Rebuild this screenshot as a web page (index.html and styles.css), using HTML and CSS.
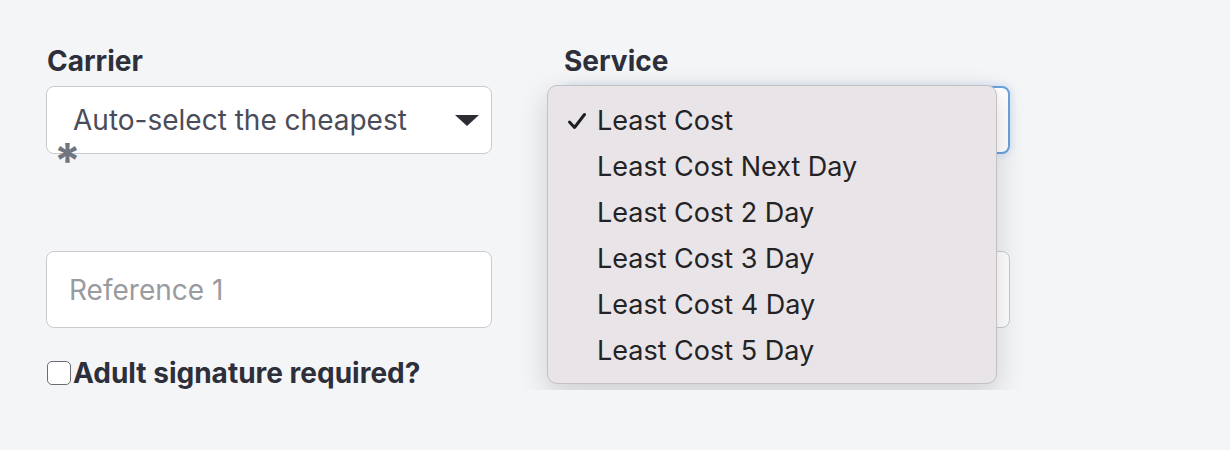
FILE: index.html
```html
<!DOCTYPE html>
<html lang="en">
<head>
  <meta charset="UTF-8" />
  <meta name="viewport" content="width=device-width, initial-scale=1.0">
  <title>Shipping options</title>
  <link rel="stylesheet" href="styles.css">
</head>
<body>
  <div class="shipping-form">
    <div class="field">
      <label class="field-label">Carrier</label>
      <div class="select-box">
        <span>Auto-select the cheapest</span>
        <svg class="caret" width="24" height="11" viewBox="0 0 24 11"><path d="M0 0 H24 L12 11 Z" fill="#2b2d33"/></svg>
      </div>
      <span class="required">*</span>
    </div>
    <div class="field">
      <label class="field-label">Service</label>
      <div class="select-box focused">
        <svg class="caret" width="24" height="11" viewBox="0 0 24 11"><path d="M0 0 H24 L12 11 Z" fill="#2b2d33"/></svg>
      </div>

      <!-- native select popup, open over the form -->
      <ul class="option-menu">
        <li class="selected">
          <svg class="check" width="20" height="18" viewBox="0 0 20 18"><path d="M2.5 10 L7.5 15.5 L17.5 2.5" fill="none" stroke="#1f1f22" stroke-width="3" stroke-linecap="round" stroke-linejoin="round"/></svg>
          Least Cost
        </li>
        <li>Least Cost Next Day</li>
        <li>Least Cost 2 Day</li>
        <li>Least Cost 3 Day</li>
        <li>Least Cost 4 Day</li>
        <li>Least Cost 5 Day</li>
      </ul>
    </div>

    <div class="field">
      <input type="text" class="text-input" placeholder="Reference 1">
    </div>
    <div class="field">
      <input type="text" class="text-input">
    </div>

    <label class="check-row">
      <input type="checkbox">
      <span>Adult signature required?</span>
    </label>
  </div>
</body>
</html>
```

FILE: styles.css
```css
body {
  margin: 0;
  background: #f4f5f7;
  font-family: Inter, "Noto Sans", sans-serif;
  color: #2f313a;
}
.shipping-form {
  display: grid;
  grid-template-columns: 446px 447px;
  column-gap: 71px;
  padding: 46px 0 0 46px;
}
.field {
  position: relative;
}
.field-label {
  display: block;
  font-size: 28px;
  font-weight: 700;
  line-height: 30px;
  margin: 0 0 10px 1px;
  color: #2d2f3a;
}
.select-box {
  box-sizing: border-box;
  height: 68px;
  background: white;
  border: 1px solid #c9cbd0;
  border-radius: 8px;
  display: flex;
  align-items: center;
  justify-content: space-between;
  padding: 0 12px 0 26px;
  font-size: 28px;
  color: #4a4d59;
}
.select-box.focused {
  justify-content: flex-end;
  border: 2px solid #6aa2e0;
  box-shadow: 0 0 8px rgba(106,162,224,0.35);
}
.required {
  display: block;
  height: 105px;
  margin: -8px 0 0 8px;
  font-size: 48px;
  line-height: 30px;
  font-weight: 700;
  color: #717580;
}
.text-input {
  box-sizing: border-box;
  width: 100%;
  height: 77px;
  background: white;
  border: 1px solid #c9cbd0;
  border-radius: 8px;
  padding: 0 22px;
  font-family: inherit;
  font-size: 28px;
  color: #2f313a;
}
.text-input::placeholder {
  color: #9a9b9f;
}
.check-row {
  grid-column: 1 / 3;
  display: flex;
  align-items: center;
  margin-top: 28px;
  font-size: 28px;
  line-height: 34px;
  font-weight: 700;
  color: #2d2f3a;
}
.check-row input {
  appearance: none;
  width: 24px;
  height: 24px;
  margin: 0 2px 0 1px;
  border: 1.5px solid #6b6d74;
  border-radius: 5px;
  background: white;
}
.option-menu {
  position: absolute;
  z-index: 10;
  left: -16px;
  top: 39px;
  width: 450px;
  box-sizing: border-box;
  margin: 0;
  padding: 12px 0 9px;
  list-style: none;
  background: #e8e4e7;
  border: 1px solid #c4c1c4;
  border-radius: 10px;
  box-shadow: 0 10px 30px rgba(0,0,0,0.16);
}
.option-menu li {
  position: relative;
  height: 46px;
  line-height: 46px;
  padding-left: 49px;
  font-size: 27px;
  color: #232326;
}
.option-menu .check {
  position: absolute;
  left: 19px;
  top: 14px;
}
```
